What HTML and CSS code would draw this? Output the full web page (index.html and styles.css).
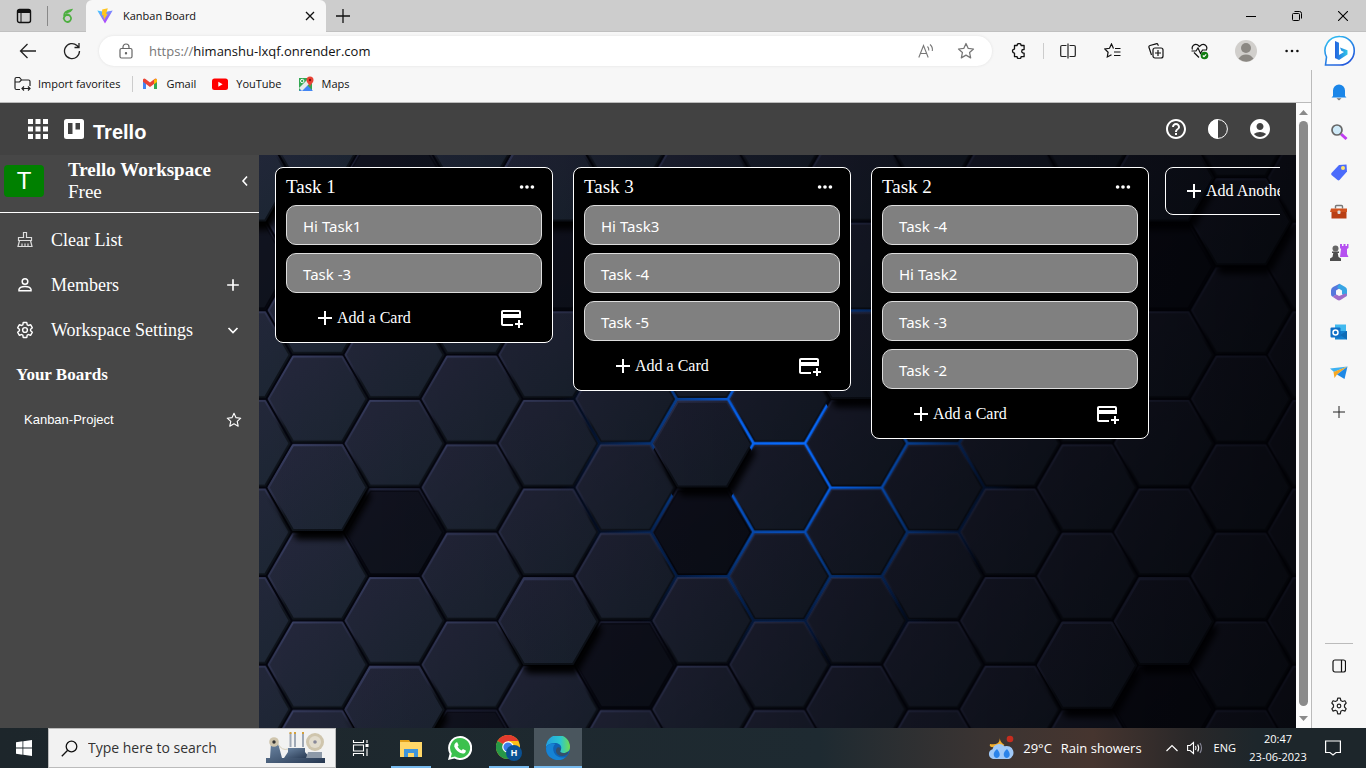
FILE: index.html
```html
<!DOCTYPE html>
<html lang="en">
<head>
<meta charset="utf-8">
<title>Kanban Board</title>
<link rel="stylesheet" href="styles.css">
</head>
<body>
<svg class="defs" aria-hidden="true">
  <defs>
    <symbol id="star" viewBox="0 0 24 24"><path d="M12 3l2.700 5.900 6.300.7-4.700 4.300 1.300 6.300L12 17l-5.600 3.200 1.300-6.300L3 9.600l6.300-.7z" fill="none" stroke="currentColor" stroke-width="1.500" stroke-linejoin="round"/></symbol>
    <symbol id="plus" viewBox="0 0 24 24"><path d="M12 5v14M5 12h14" fill="none" stroke="currentColor" stroke-width="2"/></symbol>
    <symbol id="dots" viewBox="0 0 24 24"><circle cx="5.500" cy="12" r="2.200"/><circle cx="12" cy="12" r="2.200"/><circle cx="18.500" cy="12" r="2.200"/></symbol>
    <symbol id="addcard" viewBox="0 0 24 24"><path d="M20 4H4c-1.110 0-1.990.89-1.990 2L2 18c0 1.110.89 2 2 2h10v-2H4v-6h18V6c0-1.110-.89-2-2-2zm0 4H4V6h16v2zm4 9v2h-3v3h-2v-3h-3v-2h3v-3h2v3h3z"/></symbol>
    <symbol id="gear" viewBox="0 0 24 24"><path d="M19.430 12.980c.04-.32.07-.64.07-.98s-.03-.66-.07-.98l2.110-1.650c.19-.15.24-.42.12-.64l-2-3.460c-.12-.2-.36-.3-.61-.22l-2.490 1c-.52-.4-1.080-.73-1.690-.98l-.38-2.650A.49.49 0 0 0 14 2h-4c-.25 0-.46.18-.49.42l-.38 2.650c-.61.25-1.170.59-1.690.98l-2.490-1c-.24-.08-.48 0-.61.22l-2 3.460c-.13.22-.07.49.12.64l2.110 1.650c-.04.32-.07.65-.07.98s.03.66.07.98l-2.110 1.650c-.19.15-.24.42-.12.64l2 3.460c.12.2.36.3.61.22l2.490-1c.52.4 1.080.73 1.690.98l.38 2.650c.03.24.24.42.49.42h4c.25 0 .46-.18.49-.42l.38-2.650c.61-.25 1.170-.59 1.690-.98l2.490 1c.24.08.48 0 .61-.22l2-3.460c.12-.22.07-.49-.12-.64z" fill="none" stroke="currentColor" stroke-width="1.900"/><circle cx="12" cy="12" r="3.200" fill="none" stroke="currentColor" stroke-width="1.900"/></symbol>
  </defs>
</svg>

<header class="tabs">
  <button class="icon tab-menu" aria-label="Tab actions"><svg width="16" height="16" viewBox="0 0 16 16"><rect x="1.500" y="1.500" width="13" height="13" rx="2" fill="none" stroke="#111" stroke-width="1.400"/><path d="M1.500 2h13v3h-13z"/><path d="M5 5v9" stroke="#111"/></svg></button>
  <span class="tab-rule"></span>
  <button class="icon tab-pin" aria-label="Pinned tab"><svg width="16" height="16" viewBox="0 0 16 16" fill="none" stroke="#4caf3f" stroke-width="1.700"><path d="M10.500 7.200a3.600 3.600 0 1 0 .4 5.800 3.600 3.600 0 0 0-2.200-6.200C6.500 6.800 5 8.500 4.500 11M5.300 8.500C4.500 5 7 2.500 12.500 1.800 11 4.500 9 4.500 7 4.800"/></svg></button>
  <div class="tab">
    <svg width="16" height="16" viewBox="0 0 16 16"><defs><linearGradient id="vite" x2=".6" y2="1"><stop stop-color="#41d1ff"/><stop offset="1" stop-color="#bd34fe"/></linearGradient></defs><path d="M.3 2.500l7.700 13 7.700-13-7.700 1.400z" fill="url(#vite)"/><path d="M10.800.3L5.200 1.400 4.900 7.400l1.700-.4-.5 2.500 1.200-.3-.8 3.600 4.200-7-1.700.3.700-2z" fill="#ffc51f"/></svg>
    <span class="tab-title">Kanban Board</span>
    <button class="icon" aria-label="Close tab"><svg width="10" height="10" viewBox="0 0 10 10"><path d="M1 1l8 8M9 1L1 9" stroke="#111" stroke-width="1.300"/></svg></button>
  </div>
  <button class="icon new-tab" aria-label="New tab"><svg width="14" height="14" viewBox="0 0 14 14"><path d="M7 0v14M0 7h14" stroke="#111" stroke-width="1.300"/></svg></button>
  <div class="window-buttons">
    <button class="icon" aria-label="Minimize"><svg width="10" height="10" viewBox="0 0 10 10"><path d="M0 5.500h10" stroke="#000"/></svg></button>
    <button class="icon" aria-label="Restore"><svg width="10" height="10" viewBox="0 0 10 10" fill="none" stroke="#000"><rect x=".5" y="2.500" width="7" height="7" rx="1"/><path d="M2.500.5h5a2 2 0 0 1 2 2v5"/></svg></button>
    <button class="icon" aria-label="Close"><svg width="10" height="10" viewBox="0 0 10 10"><path d="M0 0l10 10M10 0L0 10" stroke="#000" stroke-width="1.100"/></svg></button>
  </div>
</header>

<div class="toolbar">
  <button class="icon nav" aria-label="Back"><svg width="18" height="16" viewBox="0 0 18 16" fill="none" stroke="#222" stroke-width="1.300"><path d="M17 8H1.500M8.500 1l-7 7 7 7"/></svg></button>
  <button class="icon nav" aria-label="Refresh"><svg width="18" height="18" viewBox="0 0 18 18" fill="none" stroke="#222" stroke-width="1.300"><path d="M16.500 9A7.500 7.500 0 1 1 14 3.500l2 2M16 1v4.500h-4.500"/></svg></button>
  <div class="address">
    <svg width="14" height="16" viewBox="0 0 14 16" fill="none" stroke="#666" stroke-width="1.200"><rect x="1" y="5.500" width="12" height="9.500" rx="1.500"/><path d="M4 5.500V4a3 3 0 0 1 6 0v1.500"/><circle cx="7" cy="10.200" r=".6" fill="#666"/></svg>
    <a class="url" href="#"><span class="scheme">https://</span>himanshu-lxqf.onrender.com</a>
    <button class="icon" aria-label="Read aloud"><svg width="16" height="16" viewBox="0 0 16 16" fill="none" stroke="#777" stroke-width="1.100"><path d="M.8 14.500L5.500 2.500l4.700 12M2.500 10.500h6M9.500 3.500q1.500 1.500 1.300 4M12 1.500q3 2.500 2.300 6.500"/></svg></button>
    <button class="icon" aria-label="Add to favorites"><svg class="muted" width="20" height="20"><use href="#star"/></svg></button>
  </div>
  <button class="icon tool" aria-label="Extensions"><svg width="16" height="16" viewBox="0 0 16 16"><path d="M3.500 2.500h2.600a2 2 0 0 1 4 0h3v4h-.6a1.800 1.800 0 0 0 0 3.600h.6v3.600h-3a2 2 0 0 1-4 0H3.500v-3.600a2 2 0 0 1 0-4z" fill="none" stroke="#111" stroke-width="1.300" stroke-linejoin="round"/></svg></button>
  <span class="tool-rule"></span>
  <button class="icon tool" aria-label="Split screen"><svg width="16" height="16" viewBox="0 0 16 16" fill="none" stroke="#222" stroke-width="1.200"><path d="M6.500 2.500H2q-1.300 0-1.300 1.300v8.400q0 1.300 1.300 1.300h4.500M9.500 2.500H14q1.300 0 1.300 1.300v8.400q0 1.300-1.300 1.300H9.500M8 .5v15"/></svg></button>
  <button class="icon tool" aria-label="Favorites"><svg width="17" height="16" viewBox="0 0 17 16" fill="none" stroke="#111" stroke-width="1.200"><path d="M9.500 5.500L7.500 1 5.500 5.300.8 6l3.300 3.200-.8 4.800 4.200-2.300M11 5.500h5.500M10 9h6.500M10 12.500h6.500"/></svg></button>
  <button class="icon tool" aria-label="Collections"><svg width="16" height="16" viewBox="0 0 16 16" fill="none" stroke="#111" stroke-width="1.200"><rect x="5" y="5" width="10" height="10" rx="2"/><path d="M10 7v6M7 10h6M3.500 12L1 4.500Q.5 3 2 2.500L8 .8q1.500-.4 2 1l.4 1"/></svg></button>
  <button class="icon tool" aria-label="Browser essentials"><svg width="18" height="17" viewBox="0 0 18 17" fill="none" stroke="#111" stroke-width="1.200"><path d="M1.500 6.500C0 3 4 .3 6.500 1.800L8.500 3.500l2-1.700C13 .3 17 3 15.500 6.500M3 9.500l5 5M.5 8H5l2-3 2.500 5.500L11.500 7h4.500"/><circle cx="13.500" cy="12.500" r="3.800" fill="#107c10" stroke="none"/><path d="M11.800 12.500l1.200 1.200 2.200-2.300" stroke="#fff"/></svg></button>
  <button class="icon tool profile" aria-label="Profile"><svg width="22" height="22" viewBox="0 0 22 22"><circle cx="11" cy="11" r="11" fill="#d1cfcc"/><circle cx="11" cy="8" r="5" fill="#8b8883"/><path d="M3.500 18.800q2.500-4.300 7.500-4.300t7.500 4.300q-7 6-15 0z" fill="#8b8883"/></svg></button>
  <button class="icon tool" aria-label="Settings and more"><svg width="14" height="4" viewBox="0 0 14 4"><circle cx="1.600" cy="2" r="1.300"/><circle cx="7" cy="2" r="1.300"/><circle cx="12.400" cy="2" r="1.300"/></svg></button>
  <button class="icon bing" aria-label="Bing chat"><svg width="32" height="32" viewBox="0 0 32 32"><defs><linearGradient id="bing" x2=".6" y2="1"><stop stop-color="#30c8f4"/><stop offset="1" stop-color="#245bdc"/></linearGradient><linearGradient id="bing-b" x2="1"><stop stop-color="#2463e0"/><stop offset="1" stop-color="#2fc6e8"/></linearGradient></defs><path d="M16 1.500a14.200 14.200 0 1 1 0 28.500H1.500l1-8A14.200 14.200 0 0 1 16 1.500z" fill="#fff" stroke="url(#bing)" stroke-width="1.600"/><path d="M11 6l4 1.700v12.500l-4 3.200zM15 20l5-3-2.700-1.300L16 12.500l7.500 2.700v4.300L15 25l-4-2z" fill="url(#bing-b)"/></svg></button>
</div>

<div class="workspace">
  <div class="viewport">
    <nav class="bookmarks" aria-label="Favorites bar">
      <a class="bookmark import" href="#"><svg width="17" height="16" viewBox="0 0 17 16" fill="none" stroke="#222" stroke-width="1.200"><path d="M6 13.500H2.500q-1.500 0-1.500-1.500V3q0-1.500 1.500-1.500h3L7.500 4l-2 2H1M7.500 4h7q1.500 0 1.500 1.500V10M8 12.500h8M10 10.500l-2 2 2 2M14 10.500l2 2-2 2"/></svg>Import favorites</a>
      <a class="bookmark" href="#"><svg width="16" height="16" viewBox="0 0 16 16"><path d="M1 3.500v9.500h3V7z" fill="#4285f4"/><path d="M12 7v6h3V3.500z" fill="#34a853"/><path d="M1 3.500v2.300l7 5.200 7-5.200V3.500q-1-1.500-2.500-.5L8 6.500 3.500 3Q2 2 1 3.500z" fill="#ea4335"/><path d="M12 3.400L15 3v3l-3 2.200z" fill="#fbbc04"/></svg>Gmail</a>
      <a class="bookmark" href="#"><svg width="16" height="16" viewBox="0 0 16 16"><rect y="2.500" width="16" height="11.500" rx="2.500" fill="#f00"/><path d="M6.300 5.800v5l4.300-2.500z" fill="#fff"/></svg>YouTube</a>
      <a class="bookmark" href="#"><svg width="16" height="16" viewBox="0 0 16 16"><path d="M1 2h13v13H1z" fill="#34a853"/><path d="M1 15L8 8l7 7z" fill="#4285f4"/><path d="M1 12l3 3 9-9-3-3z" fill="#e8eaed"/><path d="M12 .5a3.500 3.500 0 0 1 3.500 3.500c0 3-3 4-3.500 7-.5-3-3.500-4-3.500-7A3.500 3.500 0 0 1 12 .5z" fill="#ea4335"/><circle cx="12" cy="4" r="1.200" fill="#811"/><circle cx="4.200" cy="5" r="1.700" fill="none" stroke="#fff"/></svg>Maps</a>
    </nav>

    <div class="page">
      <div class="app">
        <header class="app-header">
          <button class="icon" aria-label="Apps"><svg width="20" height="20" viewBox="0 0 20 20" fill="#fff"><path d="M0 0h5v5H0zM7.500 0h5v5h-5zM15 0h5v5h-5zM0 7.500h5v5H0zM7.500 7.500h5v5h-5zM15 7.500h5v5h-5zM0 15h5v5H0zM7.500 15h5v5h-5zM15 15h5v5h-5z"/></svg></button>
          <div class="brand"><svg width="20" height="20" viewBox="0 0 20 20"><rect width="20" height="20" rx="2.500" fill="#fff"/><rect x="4" y="4" width="4.500" height="11" fill="#424242"/><rect x="11.500" y="4" width="4.500" height="6.500" fill="#424242"/></svg><h1>Trello</h1></div>
          <div class="app-actions">
            <button class="icon" aria-label="Help"><svg width="24" height="24" viewBox="0 0 24 24" fill="#fff"><path d="M11 18h2v-2h-2v2zm1-16C6.480 2 2 6.480 2 12s4.480 10 10 10 10-4.480 10-10S17.520 2 12 2zm0 18c-4.410 0-8-3.590-8-8s3.590-8 8-8 8 3.590 8 8-3.590 8-8 8zm0-14c-2.210 0-4 1.790-4 4h2c0-1.100.9-2 2-2s2 .9 2 2c0 2-3 1.750-3 5h2c0-2.250 3-2.500 3-5 0-2.210-1.790-4-4-4z"/></svg></button>
            <button class="icon" aria-label="Contrast"><svg width="24" height="24" viewBox="0 0 24 24"><circle cx="12" cy="12" r="9.400" fill="none" stroke="#fff" stroke-width="1"/><path d="M12 2v20a10 10 0 0 1 0-20z" fill="#fff"/></svg></button>
            <button class="icon" aria-label="Account"><svg width="24" height="24" viewBox="0 0 24 24" fill="#fff"><path d="M12 2C6.480 2 2 6.480 2 12s4.480 10 10 10 10-4.480 10-10S17.520 2 12 2zm0 4c1.930 0 3.500 1.570 3.500 3.500S13.930 13 12 13s-3.500-1.570-3.500-3.500S10.070 6 12 6zm0 14c-2.030 0-4.430-.82-6.140-2.880C7.550 15.800 9.680 15 12 15s4.450.8 6.140 2.120C16.430 19.180 14.030 20 12 20z"/></svg></button>
          </div>
        </header>
        <div class="app-body">
          <aside class="side">
            <div class="side-head">
              <span class="badge">T</span>
              <div class="side-name"><strong>Trello Workspace</strong><span>Free</span></div>
              <button class="icon" aria-label="Collapse sidebar"><svg width="8" height="12" viewBox="0 0 8 12"><path d="M6 1.500L2 6l4 4.500" fill="none" stroke="#fff" stroke-width="1.600"/></svg></button>
            </div>
            <div class="side-list">
              <button class="side-row"><svg width="18" height="18" viewBox="0 0 18 18" fill="none" stroke="#ddd" stroke-width="1.200"><path d="M7.500 6.500v-5h3v5h5v3h-13v-3zM3.500 9.500L2 15.500h14l-1.500-6M6 15.500v-3M9 15.500v-3M12 15.500v-3"/></svg><span>Clear List</span></button>
              <button class="side-row"><svg width="18" height="18" viewBox="0 0 18 18" fill="none" stroke="#fff" stroke-width="1.500"><circle cx="9" cy="5.500" r="2.800"/><path d="M3 14.800v-1.500q1.200-2.800 6-2.800t6 2.800v1.500z"/></svg><span>Members</span><svg width="20" height="20"><use href="#plus"/></svg></button>
              <button class="side-row"><svg width="18" height="18"><use href="#gear"/></svg><span>Workspace Settings</span><svg width="20" height="20" viewBox="0 0 20 20"><path d="M5.500 8l4.500 4.500L14.500 8" fill="none" stroke="#fff" stroke-width="1.700"/></svg></button>
              <h2 class="side-title">Your Boards</h2>
              <div class="side-row board-row"><a href="#">Kanban-Project</a><button class="icon" aria-label="Star board"><svg width="18" height="18"><use href="#star"/></svg></button></div>
            </div>
          </aside>
          <main class="board">
            <svg class="hexes" viewBox="0 0 1037 573" preserveAspectRatio="xMinYMin slice" aria-hidden="true">
              <defs>
                <linearGradient id="face" x1=".1" y1="0" x2=".9" y2="1"><stop stop-color="#25273c"/><stop offset="1" stop-color="#1c2633"/></linearGradient>
                <linearGradient id="rim" x1=".2" y1="0" x2=".8" y2="1"><stop stop-color="#3a4065"/><stop offset=".4" stop-color="#282c44"/><stop offset=".6" stop-color="#10151d"/><stop offset="1" stop-color="#0c1118"/></linearGradient>
                <linearGradient id="shade"><stop stop-color="#000005" stop-opacity="0"/><stop offset=".3" stop-color="#000005" stop-opacity=".2"/><stop offset=".6" stop-color="#000005" stop-opacity=".48"/><stop offset="1" stop-color="#000003" stop-opacity=".76"/></linearGradient>
                <radialGradient id="glow" gradientUnits="userSpaceOnUse" cx="530" cy="285" r="235"><stop stop-color="#0a6cff"/><stop offset=".25" stop-color="#0760e8"/><stop offset=".55" stop-color="#0752bd" stop-opacity=".65"/><stop offset="1" stop-color="#06388a" stop-opacity="0"/></radialGradient>
                <filter id="soft" x="-20%" y="-20%" width="140%" height="150%"><feGaussianBlur stdDeviation="3"/></filter>
                <path id="hex" d="M-49 0L-24.500-42.400h49L49 0 24.500 42.400h-49z" stroke-linejoin="round"/>
                <g id="tile"><use href="#hex" fill="url(#face)" stroke="url(#rim)" stroke-width="2"/></g>
                <g id="dark"><use href="#hex" fill="#03040b" fill-opacity=".55" stroke="#02030a" stroke-width="3" stroke-opacity=".4"/></g>
                <g id="raised"><use href="#hex" x="4" y="9" fill="#000" stroke="#000" filter="url(#soft)"/><use href="#hex" fill="url(#face)" stroke="url(#rim)" stroke-width="2"/></g>
                <pattern id="comb" width="153.900" height="88.600" patternUnits="userSpaceOnUse">
                  <use href="#tile" x="58.600" y="66.800"/><use href="#tile" x="58.600" y="-21.800"/><use href="#tile" x="135.500" y="22.600"/><use href="#tile" x="135.500" y="111.200"/><use href="#tile" x="-18.400" y="22.600"/><use href="#tile" x="-18.400" y="111.200"/>
                </pattern>
                <pattern id="net" width="153.900" height="88.600" patternUnits="userSpaceOnUse">
                  <rect width="154" height="89" fill="#fff"/>
                  <g fill="#000" stroke="#000" stroke-width="1.200"><use href="#hex" x="58.600" y="66.800"/><use href="#hex" x="58.600" y="-21.800"/><use href="#hex" x="135.500" y="22.600"/><use href="#hex" x="135.500" y="111.200"/><use href="#hex" x="-18.400" y="22.600"/><use href="#hex" x="-18.400" y="111.200"/></g>
                </pattern>
                <mask id="netmask"><rect width="1037" height="573" fill="url(#net)"/><use href="#hex" x="443.300" y="301" fill="#000" stroke="#000" stroke-width="6"/><use href="#hex" x="597.200" y="212" fill="#000" stroke="#000" stroke-width="4"/></mask>
              </defs>
              <rect width="1037" height="573" fill="#03040d"/>
              <rect width="1037" height="573" fill="url(#comb)"/>
              <use href="#dark" x="135.500" y="377.800"/><use href="#dark" x="443.300" y="377.800"/><use href="#dark" x="366.400" y="510.400"/><use href="#dark" x="905" y="554.800"/><use href="#dark" x="212.400" y="598.800"/><use href="#dark" x="-18.400" y="111.500"/><use href="#dark" x="289.400" y="111.500"/><use href="#dark" x="905" y="111.500"/><use href="#dark" x="135.500" y="23"/>
              <use href="#raised" x="58.600" y="332.600"/><use href="#raised" x="289.400" y="466.600"/><use href="#raised" x="443.300" y="289.200"/><use href="#raised" x="135.500" y="554.800"/><use href="#raised" x="905" y="466.600"/><use href="#raised" x="828" y="510.400"/><use href="#raised" x="597.200" y="200.600"/><use href="#raised" x="982.200" y="66.800"/><use href="#raised" x="905" y="23"/><use href="#raised" x="289.400" y="23"/><use href="#raised" x="-18.400" y="23"/>
              <rect width="1037" height="573" fill="url(#shade)"/>
              <rect width="1037" height="573" fill="url(#glow)" mask="url(#netmask)"/>
            </svg>
            <div class="columns">
              <section class="column">
                <header><h2>Task 1</h2><button class="icon" aria-label="List menu"><svg width="20" height="20"><use href="#dots"/></svg></button></header>
                <ul><li>Hi Task1</li><li>Task -3</li></ul>
                <footer><button class="add"><svg width="24" height="24"><use href="#plus"/></svg>Add a Card</button><button class="icon" aria-label="Card template"><svg width="24" height="24"><use href="#addcard"/></svg></button></footer>
              </section>
              <section class="column">
                <header><h2>Task 3</h2><button class="icon" aria-label="List menu"><svg width="20" height="20"><use href="#dots"/></svg></button></header>
                <ul><li>Hi Task3</li><li>Task -4</li><li>Task -5</li></ul>
                <footer><button class="add"><svg width="24" height="24"><use href="#plus"/></svg>Add a Card</button><button class="icon" aria-label="Card template"><svg width="24" height="24"><use href="#addcard"/></svg></button></footer>
              </section>
              <section class="column">
                <header><h2>Task 2</h2><button class="icon" aria-label="List menu"><svg width="20" height="20"><use href="#dots"/></svg></button></header>
                <ul><li>Task -4</li><li>Hi Task2</li><li>Task -3</li><li>Task -2</li></ul>
                <footer><button class="add"><svg width="24" height="24"><use href="#plus"/></svg>Add a Card</button><button class="icon" aria-label="Card template"><svg width="24" height="24"><use href="#addcard"/></svg></button></footer>
              </section>
              <button class="add add-list"><svg width="24" height="24"><use href="#plus"/></svg>Add Another List</button>
            </div>
          </main>
        </div>
      </div>
      <div class="scrollbar" aria-hidden="true"><svg width="9" height="5" viewBox="0 0 9 5"><path d="M0 5l4.500-5L9 5z" fill="#8b8b8b"/></svg><span class="thumb"></span><svg width="9" height="5" viewBox="0 0 9 5"><path d="M0 0l4.500 5L9 0z" fill="#8b8b8b"/></svg></div>
    </div>
  </div>

  <nav class="edge-bar" aria-label="Browser sidebar">
    <button class="icon" aria-label="Notifications"><svg width="18" height="18" viewBox="0 0 18 18"><path d="M3 13V7.500a6 6 0 0 1 12 0V13l1.500 1.500h-15z" fill="#1b86e8"/><path d="M6.500 15.300h5L9 17.500z" fill="#777"/></svg></button>
    <button class="icon" aria-label="Search"><svg width="18" height="18" viewBox="0 0 18 18"><path d="M11 11l5.500 5" stroke="#c03df0" stroke-width="3"/><circle cx="7" cy="7" r="5" fill="#cfeaf8" stroke="#666" stroke-width="1.700"/></svg></button>
    <button class="icon" aria-label="Shopping"><svg width="18" height="18" viewBox="0 0 18 18"><path d="M1.500 10L9 2l7.500-.5L17 8.500 9.500 17q-1 .8-2 0l-6-5q-.8-1 0-2z" fill="#4b6bfb"/><circle cx="13" cy="5" r="2" fill="#ffe36b"/></svg></button>
    <button class="icon" aria-label="Tools"><svg width="18" height="18" viewBox="0 0 18 18"><path d="M5.500 5.500V3.500q0-1 1-1h5q1 0 1 1v2" fill="none" stroke="#777" stroke-width="1.400"/><path d="M1 5.500h16V9H0z" fill="#d0521e"/><path d="M1.500 9h15v6.500h-15z" fill="#b93f14"/><rect x="7.500" y="7.500" width="3" height="3.500" rx="1" fill="#ddd"/></svg></button>
    <button class="icon" aria-label="Games"><svg width="20" height="20" viewBox="0 0 20 20"><path d="M11 2h2v2h1.500V2h2v2H18V2h1.500v4l-1.500 1v5l1.500 3H11l1-8-1-1z" fill="#b550f0"/><circle cx="6.500" cy="6.500" r="3" fill="#666"/><path d="M3 9.500h7V11H8.700l.8 4 2.500 1.500V19H1v-2.500L3.500 15l.8-4H3z" fill="#4d4d4d"/></svg></button>
    <button class="icon" aria-label="Microsoft 365"><svg width="18" height="18" viewBox="0 0 18 18"><path d="M9.500.7L3 4Q1 5.200 1 7.500v3.800q0 1.500 1.500 2.500L6 12V7.500L11.500 4z" fill="#5577dd"/><path d="M9.500.7l5.700 3.200Q17 5 17 7v4.500q0 1.500-1 2.200l-4-2.500V7.500L7 4.500z" fill="#38a5e4"/><path d="M2.500 13.800L6.500 11.500 9 13l6.500-2.500L17 11q0 2-1.800 3.100L10.500 17q-1.500.8-3 0z" fill="#a06cc8"/></svg></button>
    <button class="icon" aria-label="Outlook"><svg width="18" height="18" viewBox="0 0 18 18"><path d="M5 1.500h11v9H5z" fill="#41b9ef"/><path d="M5 8h12v8.500H5z" fill="#1380cf"/><path d="M17 8v8.500L10 12z" fill="#0f6bb5"/><rect x=".5" y="4.500" width="10" height="10" rx="1" fill="#0f6fc6"/><circle cx="5.500" cy="9.500" r="2.500" fill="none" stroke="#fff" stroke-width="1.500"/></svg></button>
    <button class="icon" aria-label="Drop"><svg width="18" height="18" viewBox="0 0 18 18"><path d="M0 5.500l17.500-2L4 9z" fill="#3eb1f1"/><path d="M3.500 9l14-5.500L7 11.500 4.500 15z" fill="#f7a823"/><path d="M7 11.500L17.500 3.500 14.500 16z" fill="#1e88e5"/></svg></button>
    <button class="icon" aria-label="Customize"><svg width="12" height="12" viewBox="0 0 12 12"><path d="M6 0v12M0 6h12" stroke="#222"/></svg></button>
    <span class="edge-rule"></span>
    <button class="icon" aria-label="Hide sidebar"><svg width="14" height="14" viewBox="0 0 14 14" fill="none" stroke="#111" stroke-width="1.200"><rect x="1" y="1" width="12.500" height="12" rx="2"/><path d="M9.500 1v12"/></svg></button>
    <button class="icon" aria-label="Sidebar settings"><svg width="18" height="18" viewBox="0 0 18 18" fill="none" stroke="#222" stroke-width="1.200"><path d="M7.200 3.500l.5-2.300h2.600l.5 2.300 1.800 1 2.300-.8 1.300 2.300L14.500 8v2l1.700 1.800-1.300 2.300-2.300-.8-1.800 1-.5 2.500H7.700l-.5-2.500-1.800-1-2.300.8-1.300-2.300L3.500 10V8L1.800 6l1.300-2.300 2.300.8z" stroke-linejoin="round"/><circle cx="9" cy="9" r="1.800"/></svg></button>
  </nav>
</div>

<footer class="taskbar">
  <button class="icon start" aria-label="Start"><svg width="16" height="16" viewBox="0 0 16 16" fill="#fff"><path d="M0 2.200l6.500-.9v6.300H0zM7.300 1.200L16 0v7.600H7.300zM0 8.400h6.500v6.300L0 13.800zM7.300 8.400H16V16l-8.700-1.200z"/></svg></button>
  <label class="search">
    <svg width="17" height="17" viewBox="0 0 17 17" fill="none" stroke="#111" stroke-width="1.300"><circle cx="10.500" cy="6.500" r="5.300"/><path d="M6.700 10.300L.8 16.200"/></svg>
    <input type="text" placeholder="Type here to search" aria-label="Type here to search">
    <svg width="60" height="32" viewBox="0 0 60 32"><defs><linearGradient id="steel" y2="1"><stop stop-color="#6e88a6"/><stop offset="1" stop-color="#25364f"/></linearGradient></defs><path d="M0 26h59v5H0zM5 11h7l4 15H4z" fill="url(#steel)"/><path d="M22 16h17v4l5 6H18l4-6z" fill="url(#steel)"/><path d="M42 20h14v6H40z" fill="#8d99a8"/><path d="M23.500 1h2v14h-2zM28 1h2v14h-2zM36 1h2v14h-2z" fill="#9fa8b5"/><path d="M23.500 0h2v2h-2zM28 0h2v2h-2zM36 0h2v2h-2z" fill="#d3a03c"/><circle cx="49" cy="10" r="9" fill="#cfc5ad"/><circle cx="49" cy="10" r="6" fill="#e2dccd"/><circle cx="49" cy="10" r="1.800" fill="#889"/><circle cx="8" cy="10" r="4.800" fill="#cfc5ad"/><circle cx="8" cy="10" r="1.700" fill="#333"/><path d="M12 12q4 7 10 5" fill="none" stroke="#d8d0bb"/></svg>
  </label>
  <button class="icon task task-view" aria-label="Task view"><svg width="17" height="16" viewBox="0 0 17 16" fill="none" stroke="#fff" stroke-width="1.100"><path d="M1.500 0v2.500h10V0M1.500 16v-2.500h10V16M1.500 5h10v6h-10zM15 0v3M15 8.500V16"/><path d="M13.500 4h3v3h-3z" fill="#fff" stroke="none"/></svg></button>
  <button class="icon task open" aria-label="File Explorer"><svg width="24" height="22" viewBox="0 0 24 22"><path d="M1 3h9l2 3H1z" fill="#e3a21a"/><path d="M1 5h22v15H1z" fill="#ffd768"/><path d="M5 12h14v8h-4v-4H9v4H5z" fill="#3f95dc"/></svg></button>
  <button class="icon task" aria-label="WhatsApp"><svg width="24" height="24" viewBox="0 0 24 24"><path d="M12 0a12 12 0 1 1-5.600 22.500L0 24l1.600-6.200A12 12 0 0 1 12 0z" fill="#fff"/><path d="M12 2a10 10 0 1 1-5 18.600L2.800 21.500l1-4A10 10 0 0 1 12 2z" fill="#3cc14e"/><path d="M8 6.500l1.200-.2 1.400 3-1 1.400q1.300 2.500 4 3.700l1.300-1.400 3 1.400q0 3-3.300 3.200-6-1-8.400-7-.2-2.500 1.800-4.100z" fill="#fff"/></svg></button>
  <button class="icon task open" aria-label="Chrome"><svg width="26" height="26" viewBox="0 0 26 26"><circle cx="12" cy="12" r="12" fill="#fbc116"/><path d="M12 12L1.600 6A12 12 0 0 1 22.400 6H12z" fill="#e33b2e"/><path d="M12 12L1.600 6A12 12 0 0 0 12 24l4-7z" fill="#279847"/><circle cx="12" cy="12" r="5.800" fill="#fff"/><circle cx="12" cy="12" r="4.600" fill="#3c7de8"/><circle cx="18" cy="18" r="8" fill="#0a5193"/><text x="18" y="21" class="chrome-tag">H</text></svg></button>
  <button class="icon task open active" aria-label="Edge"><svg width="24" height="24" viewBox="0 0 24 24"><defs><linearGradient id="edge"><stop stop-color="#249fe0"/><stop offset=".6" stop-color="#2bc6d0"/><stop offset="1" stop-color="#72dc4f"/></linearGradient></defs><circle cx="12" cy="12" r="12" fill="#0f62b4"/><path d="M0 11A12 12 0 0 1 24 11c0 4-3 6-6.500 6-2.500 0-4-1-3-2.500C17 10 13 7 9 7c-4 0-7.500 1.500-9 4z" fill="url(#edge)"/><path d="M0 12C1 8 6 6.500 9.500 8 6 10 6.500 17 11 20q4 2.500 9 1A12 12 0 0 1 0 12z" fill="#1683d4"/><path d="M14.500 14.500c-1 1.500.5 2.500 3 2.500 2 0 3.500-.5 5-2l-.8 3q-3.700 3-8.200 1.500c-4-1.500-4.500-6-2-8 2-1 4 1 3 3z" fill="#35506b"/></svg></button>
  <div class="tray">
    <button class="weather"><svg width="26" height="26" viewBox="0 0 26 26"><path d="M12 1q-1 6 4.500 9L13 13 3 12q-2-1-1-3 5 1 8-1 2-2 2-7z" fill="#f3ae2c"/><circle cx="22" cy="4" r="3.300" fill="#c62d1f"/><path d="M5 24a5 5 0 0 1-.5-9.700 7 7 0 0 1 12-3 6 6 0 0 1 4.500 12.700z" fill="#9fc8f7"/><path d="M9 14q-5 4-2.500 8 3 2.500 5-1 1-3-2.500-7zM19 14q-5 4-2.500 8 3 2.500 5-1 1-3-2.500-7z" fill="#2a83ea"/></svg><span>29°C</span><span>Rain showers</span></button>
    <button class="icon chevron" aria-label="Show hidden icons"><svg width="12" height="8" viewBox="0 0 12 8"><path d="M.5 7L6 1.500 11.500 7" fill="none" stroke="#fff" stroke-width="1.200"/></svg></button>
    <button class="icon sound" aria-label="Volume"><svg width="16" height="14" viewBox="0 0 16 14" fill="none" stroke="#fff" stroke-width="1.100"><path d="M.6 4.500h2.500L6.500 1.500v11L3.100 9.500H.6zM8.500 5q1 2 0 4M10.700 3.500q2 3.500 0 7"/><path d="M13 2q3 5 0 10" stroke="#889"/></svg></button>
    <span class="lang">ENG</span>
    <time class="clock" datetime="2023-06-23T20:47"><span>20:47</span><span>23-06-2023</span></time>
    <button class="icon notes" aria-label="Action center"><svg width="16" height="16" viewBox="0 0 16 16"><path d="M.6 1h14.800v11.500H11L8 15l-3-2.500H.6z" fill="none" stroke="#fff" stroke-width="1.200"/></svg></button>
  </div>
</footer>
</body>
</html>
```

FILE: styles.css
```css
* { box-sizing: border-box; }

body {
  margin: 0;
  height: 100vh;
  display: flex;
  flex-direction: column;
  overflow: hidden;
  font: 11px/16px "Open Sans", "Noto Sans", sans-serif;
  color: #111;
  background: #f7f7f7;
}

button { border: 0; padding: 0; background: none; color: inherit; font: inherit; }
a { color: inherit; text-decoration: none; }
h1, h2, ul { margin: 0; padding: 0; }
ul { list-style: none; }
svg { flex: none; display: block; }
svg:not([fill]) { fill: currentColor; }

.defs { position: absolute; width: 0; height: 0; }
.icon { display: flex; align-items: center; justify-content: center; flex: none; }

/* Browser frame */
.tabs { display: flex; flex: none; height: 32px; background: #cdcdcd; box-shadow: inset 0 -1px #c0c0c0; }
.tab-menu { width: 47px; }
.tab-rule { width: 1px; height: 20px; margin-top: 6px; background: #888; }
.tab-pin { width: 38px; }
.tab { width: 240px; display: flex; align-items: center; gap: 10px; padding: 0 11px; background: #f7f7f7; border-radius: 6px 6px 0 0; }
.tab-title { flex: 1; }
.new-tab { width: 34px; }
.window-buttons { display: flex; margin-left: auto; }
.window-buttons .icon { width: 46px; }

.toolbar { display: flex; flex: none; align-items: center; height: 38px; padding-left: 6px; }
.nav { width: 44px; height: 32px; }
.address { flex: 1; display: flex; align-items: center; height: 30px; margin: 0 5px; padding: 0 6px 0 20px; background: #fff; border-radius: 15px; box-shadow: 0 0 3px #e0e0e0; }
.address .icon { width: 40px; height: 30px; }
.url { flex: 1; margin-left: 16px; font-size: 13px; }
.scheme { color: #777; }
.muted { color: #777; }
.tool { width: 44px; height: 32px; }
.profile { width: 48px; }
.tool-rule { width: 1px; height: 16px; margin: 0 2px; background: #ccc; }
.bing { width: 52px; }

.workspace { flex: 1; display: flex; min-height: 0; }
.viewport { flex: 1; min-width: 0; display: flex; flex-direction: column; }
.bookmarks { display: flex; flex: none; align-items: center; height: 33px; padding: 0 14px 5px; border-bottom: 1px solid #bbb; }
.bookmark { display: flex; align-items: center; gap: 8px; margin-right: 16px; }
.import { gap: 7px; padding-right: 12px; margin-right: 9px; border-right: 1px solid #ccc; }

.edge-bar { flex: none; width: 55px; display: flex; flex-direction: column; align-items: center; padding: 2px 0; border-left: 1px solid #bbb; }
.edge-bar .icon { width: 40px; height: 40px; }
.edge-rule { width: 28px; height: 1px; margin: auto 0 2px; background: #bbb; }

/* App */
.page { flex: 1; min-height: 0; display: flex; }
.app { flex: 1; min-width: 0; display: flex; flex-direction: column; color: #fff; }
.app-header { flex: none; display: flex; align-items: center; gap: 16px; height: 52px; padding: 0 24px 0 28px; background: #424242; }
.brand { display: flex; align-items: center; gap: 9px; }
.brand h1 { font: bold 20px/24px "Liberation Sans", sans-serif; padding-top: 6px; }
.app-actions { display: flex; gap: 18px; margin-left: auto; }

.scrollbar { flex: none; width: 15px; display: flex; flex-direction: column; align-items: center; gap: 6px; padding: 7px 0; background: #fcfcfc; }
.thumb { flex: 1; width: 9px; margin-bottom: 4px; border-radius: 5px; background: #8b8b8b; }

.app-body { flex: 1; display: flex; min-height: 0; }
.side { flex: none; width: 259px; background: #474747; font: 18px/20px "Liberation Serif", serif; }
.side-head { display: flex; align-items: flex-start; height: 58px; padding: 4px 10px 0 4px; border-bottom: 1px solid #fff; }
.badge { width: 40px; height: 32px; margin: 6px 24px 0 0; border-radius: 4px; background: #008000; font: 24px/32px "Liberation Sans", sans-serif; text-align: center; }
.side-name { flex: 1; font-size: 19px; line-height: 22px; }
.side-name strong, .side-name span { display: block; }
.side-head .icon { margin-top: 16px; }
.side-list { padding: 4px 16px 0; }
.side-row { display: flex; align-items: center; width: 100%; height: 45px; gap: 17px; text-align: left; }
.side-row span { flex: 1; }
.side-title { font-size: 17px; line-height: 45px; }
.board-row { padding-left: 8px; justify-content: space-between; font: 13px/20px "Liberation Sans", sans-serif; }

.board { position: relative; flex: 1; min-width: 0; padding: 12px 16px; background: #03040d; }
.hexes { position: absolute; inset: 0; width: 100%; height: 100%; }
.columns { position: relative; display: flex; align-items: flex-start; gap: 20px; overflow: hidden; font: 16px/20px "Liberation Serif", serif; }
.column { flex: none; width: 278px; padding: 0 10px; background: #000; border: 1px solid #fff; border-radius: 8px; }
.column header { display: flex; align-items: center; justify-content: space-between; height: 37px; padding-right: 5px; }
.column h2 { font-size: 19px; font-weight: normal; line-height: 22px; }
.column ul { display: flex; flex-direction: column; gap: 8px; }
.column li { height: 40px; padding: 0 16px; border: 1px solid #ddd; border-radius: 10px; background: #808080; font: 15px/40px "Noto Sans", sans-serif; }
.column footer { display: flex; align-items: center; justify-content: space-between; height: 49px; padding: 0 19px 0 27px; }
.add { display: flex; align-items: center; white-space: nowrap; }
.add-list { flex: none; width: 278px; height: 48px; margin-left: -4px; padding-left: 16px; border: 1px solid #fff; border-radius: 8px; }

/* Taskbar */
.taskbar { flex: none; display: flex; height: 40px; color: #fff; background: linear-gradient(90deg, #1d262b 0, #1e2a31 60%, #3b3432 72%, #46352f 80%, #2a2829 87%, #1d262b 92%); }
.start { width: 48px; }
.search { display: flex; align-items: center; width: 288px; padding: 0 9px 0 12px; background: #f2f2f2; border: 1px solid #bbb; }
.search input { flex: 1; min-width: 0; margin-left: 10px; padding: 0; border: 0; background: none; font: 14px/20px "Open Sans", sans-serif; }
.search input::placeholder { color: #333; opacity: 1; }
.task { width: 48px; margin-right: 1px; }
.task-view { margin-right: 3px; }
.open { background: linear-gradient(#76b9ed, #76b9ed) center bottom / 40px 2px no-repeat; }
.active { background: linear-gradient(#76b9ed, #76b9ed) center bottom / 48px 2px no-repeat #4a565e; }
.chrome-tag { fill: #fff; font: bold 9px "Liberation Sans", sans-serif; text-anchor: middle; }
.tray { display: flex; align-items: center; margin-left: auto; }
.weather { display: flex; align-items: center; gap: 9px; margin-right: 22px; font-size: 13px; }
.chevron { width: 16px; }
.sound { width: 30px; }
.lang { margin-left: 4px; }
.clock { display: flex; flex-direction: column; width: 84px; text-align: center; line-height: 18px; }
.notes { width: 26px; margin-right: 20px; }
```
